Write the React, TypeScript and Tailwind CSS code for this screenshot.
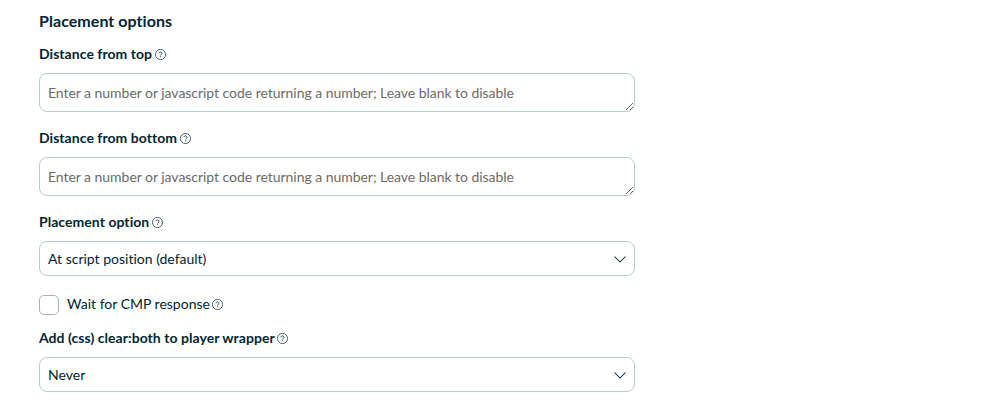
import React, { useState } from 'react';

const HelpIcon = () => (
  <svg viewBox="0 0 11 11" fill="none" stroke="currentColor" className="w-[11px] h-[11px] shrink-0 relative top-px">
    <circle cx="5.5" cy="5.5" r="5.1" strokeWidth="0.7" />
    <path d="M4 4.3c0-1 .7-1.4 1.5-1.4S7 3.4 7 4.2c0 1.1-1.4 1.1-1.4 2.2" strokeWidth="0.8" />
    <path d="M5.6 7.3v.9" strokeWidth="0.9" />
  </svg>
);

const FieldLabel = ({ children }: { children: string }) => (
  <div className="flex items-center gap-[2.5px] h-[21px] mb-[9px] font-bold tracking-[0.045px]">
    <span>{children}</span>
    <HelpIcon />
  </div>
);

const NumberField = ({ label }: { label: string }) => (
  <div className="mb-[15px]">
    <FieldLabel>{label}</FieldLabel>
    <textarea
      rows={1}
      placeholder="Enter a number or javascript code returning a number; Leave blank to disable"
      className="block w-full h-[39px] px-2 pt-2 pb-[10px] leading-[21px] tracking-[-0.04px] border border-[#bccaca] rounded-[8px] bg-white placeholder:text-[#6b6b6b] overflow-hidden resize-y focus:outline-none"
    />
  </div>
);

const SelectField = ({ label, value }: { label: string; value: string }) => (
  <div>
    <FieldLabel>{label}</FieldLabel>
    <button className="flex items-center justify-between w-full h-[35px] pl-2 pr-[8px] border border-[#bccaca] rounded-[8px] bg-white text-left">
      <span>{value}</span>
      <svg viewBox="0 0 16 16" fill="none" stroke="currentColor" strokeWidth="1.4" strokeLinecap="round" strokeLinejoin="round" className="w-3 h-3">
        <path d="m1 5 7 7 7-7" />
      </svg>
    </button>
  </div>
);

export default function App() {
  const [waitForCmp, setWaitForCmp] = useState(false);

  return (
    <div className="w-full h-[409px] overflow-hidden bg-white pl-[39px] pt-[9px] font-['Lato',sans-serif] text-sm leading-[21px] text-[#002633] antialiased [font-variant-ligatures:none]">
      <div className="w-[596px]">
        <h2 className="text-base leading-6 font-bold tracking-[0.05px] mb-[10px]">Placement options</h2>
        <NumberField label="Distance from top" />
        <NumberField label="Distance from bottom" />
        <SelectField label="Placement option" value="At script position (default)" />
        <label className="flex items-start gap-2 h-[21px] mt-[18px] mb-[12px]">
          <input
            type="checkbox"
            checked={waitForCmp}
            onChange={(e) => setWaitForCmp(e.target.checked)}
            className="appearance-none w-5 h-5 mt-px border border-[#a8b5b8] rounded-[5px] bg-white checked:bg-[#002633]"
          />
          <span className="flex items-center gap-[2.5px] -mt-px">
            Wait for CMP response
            <HelpIcon />
          </span>
        </label>
        <SelectField label="Add (css) clear:both to player wrapper" value="Never" />
      </div>
    </div>
  );
}
